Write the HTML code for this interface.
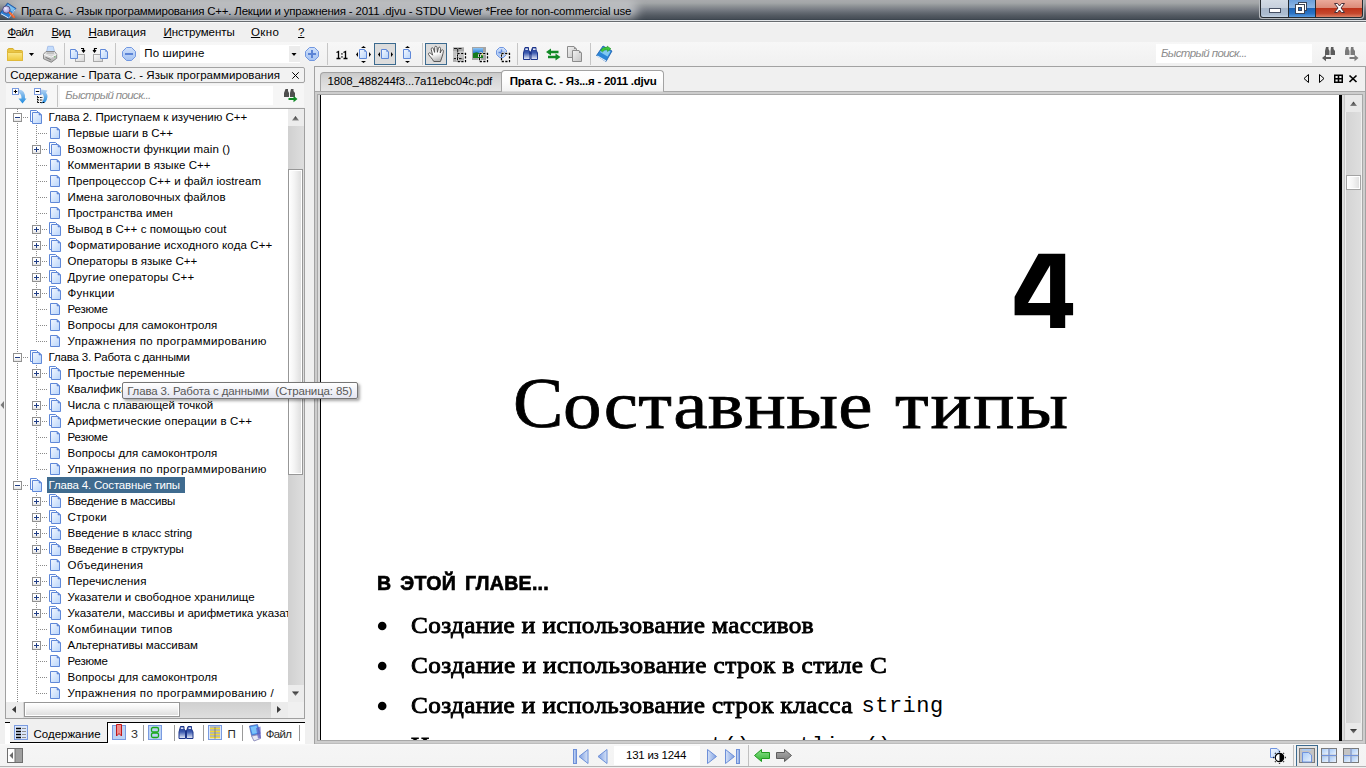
<!DOCTYPE html>
<html lang="ru">
<head>
<meta charset="utf-8">
<title>STDU Viewer</title>
<style>
*{box-sizing:border-box;margin:0;padding:0}
html,body{width:1366px;height:768px;overflow:hidden;background:#f0f0f0;font-family:"Liberation Sans",sans-serif;font-size:12px;color:#000}
div,span,svg{position:absolute}
svg{overflow:visible}
#titlebar{left:0;top:0;width:1366px;height:20px;background:linear-gradient(#a9aaad 0%,#a3a6a8 15%,#8c9094 32%,#797d85 47%,#646a72 63%,#525961 79%,#474e57 93%,#38414a 100%)}
#titleline1{left:0;top:20px;width:1366px;height:1px;background:#e0e3e6}
#titleline1b{left:0;top:21px;width:1366px;height:1px;background:#686c70}
#titleline2{left:0;top:22px;width:1366px;height:1px;background:#fafafa}
#titleglow{left:10px;top:0px;width:628px;height:19px;background:rgba(205,207,210,.75);filter:blur(5px);border-radius:9px}
#titletext{left:21px;top:4px;font-size:11.5px;line-height:14px;white-space:nowrap;color:#000}
#menubar{left:0;top:23px;width:1366px;height:19px;background:#f0f0f0}
.mi{top:2px;font-size:11.5px;line-height:14px;white-space:nowrap}
.mi u{text-decoration:underline;text-underline-offset:1px}
#toolbar{left:0;top:42px;width:1366px;height:24px;background:linear-gradient(#f7f7f7,#f0f0f0)}
.tsep{top:1px;width:1px;height:22px;background:#c6c6c6}
.tbtn{top:1px;width:22px;height:22px;border:1px solid #3b6a8f;background:#dcdcdc}
/* left panel */
#phead{left:5px;top:67px;width:300px;height:16px;border:1px solid #a3a3a3;border-radius:2px;background:#f2f2f2}
#phead span{left:4px;top:0;font-size:11.5px;line-height:14px;white-space:nowrap;width:276px;overflow:hidden}
#psearch{left:6px;top:84px;width:298px;height:23px;background:#f6f6f6}
#pinput{left:60px;top:86px;width:213px;height:19px;background:#fff}
.ph{font-style:italic;color:#8c8c8c;font-size:11.5px;line-height:14px;white-space:nowrap}
#tree{left:5px;top:108px;width:300px;height:611px;border:1px solid #a0a0a0;background:#fff;overflow:hidden}
#treein{left:-6px;top:-109px;width:294px;height:810px;overflow:hidden}
.t{height:16px;font-size:11.5px;line-height:16px;white-space:nowrap}
.vd{width:1px;background:repeating-linear-gradient(to bottom,#8a8a8a 0,#8a8a8a 1px,transparent 1px,transparent 2px)}
.hd{height:1px;background:repeating-linear-gradient(to right,#8a8a8a 0,#8a8a8a 1px,transparent 1px,transparent 2px)}
.ex{width:9px;height:9px;border:1px solid #919191;background:linear-gradient(#fff 0%,#fff 50%,#e2e2e2 100%)}
.ex i{position:absolute;left:1px;top:3px;width:5px;height:1px;background:#1f3d85}
.ex b{position:absolute;left:3px;top:1px;width:1px;height:5px;background:#1f3d85}
#ptabs{left:5px;top:722px;width:300px;height:22px;background:#fff}
/* doc area */
#dframe{left:314px;top:66px;width:1052px;height:678px;border:1px solid #a2a2a2;background:#f0f0f0}
#dview{left:315px;top:91px;width:1050px;height:653px;background:#bdbdbd}
#page{left:321px;top:95px;width:1018px;height:645px;background:#fff;overflow:hidden}
#status{left:0;top:744px;width:1366px;height:24px;background:linear-gradient(#fafafa 0,#f5f5f5 2px,#f3f3f3 100%)}
.bl{font-family:"Liberation Serif",serif;font-size:24px;line-height:28px;white-space:nowrap;transform:scaleX(1.05);transform-origin:0 0;-webkit-text-stroke:.9px #000}
</style>
</head>
<body>
<svg width="0" height="0" style="left:-10px;top:-10px">
<defs>
<linearGradient id="gpg" x1="0" y1="0" x2="1" y2="1"><stop offset="0" stop-color="#f4f8fe"/><stop offset="1" stop-color="#b7d4fb"/></linearGradient>
<linearGradient id="gpgG" x1="0" y1="0" x2="1" y2="1"><stop offset="0" stop-color="#f2f2f2"/><stop offset="1" stop-color="#c4c4c4"/></linearGradient>
<linearGradient id="gpgL" x1="0" y1="0" x2="1" y2="1"><stop offset="0" stop-color="#fbfbfb"/><stop offset="1" stop-color="#d4d4d4"/></linearGradient>
<linearGradient id="gnav" x1="0" y1="0" x2="1" y2="0"><stop offset="0" stop-color="#d5e2f8"/><stop offset="1" stop-color="#7f9fe0"/></linearGradient>
<linearGradient id="gnavr" x1="1" y1="0" x2="0" y2="0"><stop offset="0" stop-color="#d5e2f8"/><stop offset="1" stop-color="#7f9fe0"/></linearGradient>
<linearGradient id="gsb" x1="0" y1="0" x2="1" y2="0"><stop offset="0" stop-color="#f3f3f3"/><stop offset="0.5" stop-color="#e6e6e6"/><stop offset="1" stop-color="#d4d4d4"/></linearGradient>
<!-- single page 10x12 -->
<symbol id="isgl" viewBox="0 0 10 12">
<path d="M0.5 0.5H7L9.5 3V11.5H0.5Z" fill="url(#gpg)" stroke="#5f88d8" stroke-width="1"/>
<path d="M7 0.5V3H9.5Z" fill="#5f88d8" stroke="#5f88d8" stroke-width="0.6"/>
</symbol>
<!-- double page 12x14 -->
<symbol id="idbl" viewBox="0 0 12 14">
<path d="M0.5 0.5H6.5L8.5 2.5V11.5H0.5Z" fill="#fbfdff" stroke="#5f88d8" stroke-width="1"/>
<path d="M2.5 2.5H9L11.5 5V13.5H2.5Z" fill="url(#gpg)" stroke="#5f88d8" stroke-width="1"/>
<path d="M9 2.5V5H11.5Z" fill="#5f88d8" stroke="#5f88d8" stroke-width="0.6"/>
</symbol>
<!-- toolbar page 8x10 -->
<symbol id="ipg8" viewBox="0 0 8 10">
<path d="M0.5 0.5H5.3L7.5 2.7V9.5H0.5Z" fill="url(#gpg)" stroke="#5f88d8" stroke-width="1"/>
<path d="M5.3 0.500V2.700H7.500Z" fill="#5f88d8"/>
</symbol>
</defs>
</svg>
<!-- TITLE BAR -->
<div id="titlebar"></div>
<div id="titleglow"></div>
<div id="titleline1"></div><div id="titleline1b"></div><div id="titleline2"></div>
<svg id="appicon" style="left:0;top:2px" width="17" height="18" viewBox="0 0 17 18">
<defs><radialGradient id="glens" cx="0.4" cy="0.35" r="0.7"><stop offset="0" stop-color="#f4f0ff"/><stop offset="0.6" stop-color="#b9b0e6"/><stop offset="1" stop-color="#8f86c8"/></radialGradient></defs>
<path d="M7.5 1L16 6.5L8.5 16.5L0 11.5Z" fill="#2a7fd6" stroke="#1b4f9c" stroke-width="0.8"/>
<path d="M8 2.2L15 6.8L12.5 10L6 5Z" fill="#7cc0f0"/>
<path d="M1 11.8L8.3 15.8" stroke="#e8f2ff" stroke-width="1"/>
<path d="M15.3 7.5L9 15.8" stroke="#cfe4fb" stroke-width="0.9"/>
<circle cx="6.4" cy="7.6" r="3.7" fill="url(#glens)" stroke="#4a4a78" stroke-width="0.9"/>
<path d="M9.8 10.8L14 15" stroke="#f0642c" stroke-width="2.2" stroke-linecap="round"/>
<path d="M10.2 10.6L14.2 14.6" stroke="#ffc8a8" stroke-width="0.6" stroke-dasharray="1 1"/>
</svg>
<div id="titletext" style="letter-spacing:-0.204px;left:21.0px;">Прата С. - Язык программирования C++. Лекции и упражнения - 2011 .djvu - STDU Viewer *Free for non-commercial use</div>
<!-- window buttons -->
<div style="left:1259px;top:0;width:105px;height:19px;background:#b4b8bc;border-radius:0 0 3px 3px"></div>
<div style="left:1260px;top:0;width:103px;height:18px;background:#262b31;border-radius:0 0 3px 3px"></div>
<div style="left:1261px;top:0;width:27px;height:17px;background:linear-gradient(#d3dbe5 0%,#c6d0dd 46%,#a8b7ca 47%,#adbdd0 85%,#c4d4e6 100%);border-radius:0 0 0 2px"></div>
<div style="left:1289px;top:0;width:26px;height:17px;background:linear-gradient(#6c9eda 0%,#8cb6e6 46%,#1b62b6 47%,#2b74c6 80%,#5b9ce0 100%)"></div>
<div style="left:1316px;top:0;width:46px;height:17px;background:linear-gradient(#eaaa9a 0%,#dc8b78 46%,#bd3118 47%,#c5482e 80%,#dc8268 100%);border-radius:0 0 2px 0"></div>
<svg style="left:1261px;top:0" width="102" height="17" viewBox="0 0 102 17">
<rect x="8.5" y="8.5" width="11" height="4" fill="#fff" stroke="#454f63" stroke-width="1"/>
<rect x="37.500" y="2.500" width="8" height="8" fill="#fff" stroke="#3a4458" stroke-width="1"/>
<rect x="34.500" y="4.500" width="9" height="9" fill="#fff" stroke="#3a4458" stroke-width="1"/>
<rect x="37.500" y="7.500" width="3" height="3" fill="#2a70c8" stroke="#3a4458" stroke-width="1"/>
<path d="M73.5 3.5H76.5L78.5 6L80.5 3.5H83.5L80 8L83.5 12.5H80.5L78.5 10L76.5 12.5H73.5L77 8Z" fill="#fff" stroke="#4a3038" stroke-width="1" stroke-linejoin="round"/>
</svg>

<!-- MENU BAR -->
<div id="menubar">
<span class="mi" id="m0" style="letter-spacing:-0.7px;left:7.5px;"><u>Ф</u>айл</span>
<span class="mi" id="m1" style="letter-spacing:-0.8px;left:51.5px;"><u>В</u>ид</span>
<span class="mi" id="m2" style="letter-spacing:0.1px;left:88.4px;"><u>Н</u>авигация</span>
<span class="mi" id="m3" style="letter-spacing:-0.05px;left:163.5px;"><u>И</u>нструменты</span>
<span class="mi" id="m4" style="letter-spacing:0.433px;left:250.9px;"><u>О</u>кно</span>
<span class="mi" id="m5" style="left:298px"><u>?</u></span>
</div>

<!-- TOOLBAR -->
<div id="toolbar">
<div class="tsep" style="left:64px"></div><div class="tsep" style="left:115px"></div><div class="tsep" style="left:327px"></div>
<div class="tsep" style="left:422px"></div><div class="tsep" style="left:517px"></div><div class="tsep" style="left:590px"></div>
<div class="tbtn" style="left:374px"></div><div class="tbtn" style="left:425px"></div>
<!-- combo -->
<div style="left:140px;top:3px;width:160px;height:18px;background:#fff"></div>
<div style="left:289px;top:4px;width:11px;height:16px;background:#ececec"></div>
<span id="combotxt" style="top:4px;font-size:11.5px;line-height:14px;white-space:nowrap;letter-spacing:0.137px;left:144.3px;">По ширине</span>
<!-- quick search -->
<div id="qinput" style="left:1156px;top:2px;width:156px;height:19px;background:#fff"></div>
<span class="ph" id="qph" style="top:4px;letter-spacing:-0.613px;left:1161.0px;">Быстрый поиск...</span>
<svg style="left:0;top:0" width="1366" height="24" viewBox="0 0 1366 24">
<defs>
<linearGradient id="gfold" x1="0" y1="0" x2="0" y2="1"><stop offset="0" stop-color="#fbe88a"/><stop offset="1" stop-color="#eec83c"/></linearGradient>
<linearGradient id="gcirc" x1="0" y1="0" x2="0" y2="1"><stop offset="0" stop-color="#cfe0fa"/><stop offset="1" stop-color="#a4c2f2"/></linearGradient>
<linearGradient id="gbino" x1="0" y1="0" x2="0" y2="1"><stop offset="0" stop-color="#20388c"/><stop offset="0.45" stop-color="#3d5bb0"/><stop offset="1" stop-color="#eef2fb"/></linearGradient>
<linearGradient id="ghand" x1="0" y1="0" x2="0.3" y2="1"><stop offset="0" stop-color="#fff"/><stop offset="0.6" stop-color="#fafafa"/><stop offset="1" stop-color="#bdbdbd"/></linearGradient>
<linearGradient id="gprn" x1="0" y1="0" x2="0" y2="1"><stop offset="0" stop-color="#f0f0f0"/><stop offset="1" stop-color="#a9a9a9"/></linearGradient>
<linearGradient id="gimg" x1="0" y1="0" x2="0" y2="1"><stop offset="0" stop-color="#8fc7f5"/><stop offset="0.45" stop-color="#2f7fd8"/><stop offset="0.55" stop-color="#2b8a2b"/><stop offset="1" stop-color="#0d5a14"/></linearGradient>
</defs>
<!-- folder -->
<path d="M7.5 8.5Q7.5 6.5 9 6.5H13L14.5 8.5H21.5Q22.5 8.5 22.5 9.5V18.5H7.5Z" fill="#e9c544" stroke="#d8b030" stroke-width="1"/>
<path d="M7.5 18.5V10.5H22.5V18.5Z" fill="url(#gfold)" stroke="#e0b93a" stroke-width="1"/>
<path d="M29 11H34L31.5 14Z" fill="#000"/>
<!-- printer -->
<path d="M47.8 4.300H53.200L54.600 10H46.600Z" fill="#c3dcfc" stroke="#9db8e4" stroke-width="0.8"/>
<path d="M43.500 12.200L46 9.500H54.600L56.700 12.200V16.300L51.300 20.300L43.500 16.800Z" fill="url(#gprn)" stroke="#808080" stroke-width="0.9" stroke-linejoin="round"/>
<path d="M43.800 12.300L51.200 15.200L56.500 12.300" fill="none" stroke="#fafafa" stroke-width="0.9"/>
<path d="M45.500 15.300L50.800 17.700" stroke="#6e6e6e" stroke-width="0.9"/>
<path d="M46.500 11H54" stroke="#8a8a8a" stroke-width="0.8"/>
<rect x="54.300" y="14.300" width="1.100" height="1.100" fill="#3aa63a"/>
<!-- rotate right -->
<rect x="75.5" y="12.5" width="9" height="7" fill="url(#gpgL)" stroke="#a8a8a8"/>
<use href="#ipg8" x="70" y="7" width="8" height="10"/>
<path d="M81 6.5H83.5V9.5M82 8.2L83.5 10L85 8.2" fill="none" stroke="#000" stroke-width="1.2"/>
<!-- rotate left -->
<rect x="93.5" y="12.5" width="9" height="7" fill="url(#gpgL)" stroke="#a8a8a8"/>
<use href="#ipg8" x="100" y="7" width="8" height="10"/>
<path d="M97 6.5H94.5V9.5M93 8.2L94.5 10L96 8.2" fill="none" stroke="#000" stroke-width="1.2"/>
<!-- minus / plus -->
<path d="M126.5 5.5H131.5L135.5 9.5V14.5L131.5 18.5H126.5L122.5 14.5V9.5Z" fill="url(#gcirc)" stroke="#7197e0" stroke-width="1"/>
<rect x="125" y="11" width="8" height="2" fill="#5b84d6"/>
<path d="M309.5 5.5H314.5L318.5 9.5V14.5L314.5 18.5H309.5L305.5 14.5V9.5Z" fill="url(#gcirc)" stroke="#7197e0" stroke-width="1"/>
<rect x="308" y="11" width="8" height="2" fill="#5b84d6"/><rect x="311" y="8" width="2" height="8" fill="#5b84d6"/>
<path d="M291.5 11H296.5L294 14Z" fill="#000"/>
<!-- 1:1 -->
<path d="M336.5 10.5L338.5 9.5V16M336.5 16.5H340.5M343.5 10.5L345.5 9.5V16M343.5 16.5H347.5" fill="none" stroke="#000" stroke-width="1.3"/>
<rect x="341.3" y="11.2" width="1.3" height="1.4" fill="#000"/><rect x="341.3" y="14.2" width="1.3" height="1.4" fill="#000"/>
<!-- fit page -->
<use href="#ipg8" x="359" y="7" width="8" height="10"/>
<path d="M358 10L356 12.5L358 15ZM369 10L371 12.5L369 15ZM361 6L363.5 4L366 6ZM361 19L363.5 21L366 19Z" fill="#000"/>
<!-- fit width (selected) -->
<use href="#ipg8" x="381" y="7" width="8" height="10"/>
<path d="M380 10L378 12.5L380 15ZM391 10L393 12.5L391 15Z" fill="#000"/>
<!-- fit height -->
<use href="#ipg8" x="403" y="7" width="8" height="10"/>
<path d="M405 6L407.5 4L410 6ZM405 19L407.5 21L410 19Z" fill="#000"/>
<!-- hand -->
<path d="M433.8 19.5C432 16.5 430.2 14.8 428.6 12.6C427.8 11.3 429.4 10.2 430.6 11.2L432.6 13.2L431.2 7.2C430.9 5.6 432.9 5.2 433.4 6.6L434.6 10.4L434.7 5.4C434.8 3.9 436.8 3.9 437 5.4L437.4 10.3L438.4 6C438.8 4.6 440.6 5 440.5 6.5L440.2 11L441.4 8.4C442 7.2 443.6 7.8 443.4 9.2C442.9 12.5 441.8 16 440.4 19.5Z" fill="url(#ghand)" stroke="#4a4a4a" stroke-width="0.9" stroke-linejoin="round"/>
<!-- text select -->
<rect x="453" y="5.3" width="11" height="14.6" fill="#a9a9a9"/>
<rect x="453" y="9" width="11" height="7" fill="#c2c2c2"/>
<path d="M454 6.500H457M458.500 6.500H461.500M457.700 6.500V16.500M454 16.500H461.500" stroke="#1a1a1a" stroke-width="1"/>
<rect x="457.5" y="11.5" width="8" height="8" fill="none" stroke="#fafafa" stroke-width="3" stroke-dasharray="2.6 1" stroke-dashoffset=".2"/>
<rect x="457.5" y="11.5" width="8" height="8" fill="none" stroke="#000" stroke-width="1.3" stroke-dasharray="2.2 1.4"/>
<!-- image select -->
<rect x="472" y="5" width="14" height="13" fill="#a5a5a5"/>
<rect x="473" y="6" width="10" height="10" fill="url(#gimg)"/>
<path d="M473 12Q476 9 479 11.5L483 13V16H473Z" fill="#157a1c"/>
<path d="M479 12.5L483 11V13.5Z" fill="#f0e070"/>
<rect x="479.5" y="11.5" width="8" height="8" fill="none" stroke="#fafafa" stroke-width="3" stroke-dasharray="2.6 1" stroke-dashoffset=".2"/>
<rect x="479.5" y="11.5" width="8" height="8" fill="none" stroke="#000" stroke-width="1.3" stroke-dasharray="2.2 1.4"/>
<!-- zoom select -->
<path d="M499.5 5.5H503.5L506.5 8.5V12.5L503.5 15.5H499.5L496.5 12.5V8.5Z" fill="url(#gcirc)" stroke="#7197e0" stroke-width="1"/>
<path d="M498.5 10.5H504.5M501.5 7.5V13.5" stroke="#5b84d6" stroke-width="1.4"/>
<rect x="501.5" y="11.5" width="8" height="8" fill="none" stroke="#fafafa" stroke-width="3" stroke-dasharray="2.6 1" stroke-dashoffset=".2"/>
<rect x="501.5" y="11.5" width="8" height="8" fill="none" stroke="#000" stroke-width="1.3" stroke-dasharray="2.2 1.4"/>
<!-- binoculars -->
<g id="bino">
<path d="M525 5.5H528.5V8L530 10V17.5H523.5V11Z" fill="url(#gbino)" stroke="#1c348a" stroke-width="1"/>
<path d="M532.5 5.5H536V8L537.5 11V17.5H531V10Z" fill="url(#gbino)" stroke="#1c348a" stroke-width="1"/>
<rect x="529.5" y="9.5" width="2" height="3" fill="#1c348a"/>
<rect x="525.3" y="6.4" width="2.6" height="1.6" fill="#dfe6f8"/><rect x="533" y="6.4" width="2.6" height="1.6" fill="#dfe6f8"/>
</g>
<!-- green arrows -->
<path d="M546 10L551 6.6V8.8H558.5V11.2H551V13.4Z" fill="#118a26"/>
<path d="M560.5 15L555.5 11.6V13.8H548V16.2H555.5V18.4Z" fill="#118a26"/>
<!-- copy (disabled) -->
<path d="M567.5 4.5H574L576.5 7V15.5H567.5Z" fill="url(#gpgG)" stroke="#8c8c8c"/>
<path d="M574 4.5V7H576.5Z" fill="#8c8c8c"/>
<path d="M572.5 8.5H579L581.5 11V19.5H572.5Z" fill="url(#gpgG)" stroke="#8c8c8c"/>
<path d="M579 8.5V11H581.5Z" fill="#8c8c8c"/>
<!-- book -->
<path d="M603 4L612 9L606 19.5L596.5 13.5Z" fill="#2b86d8" stroke="#1a5fae" stroke-width="0.8"/>
<path d="M603.2 5.5L610.5 9.5L607.5 14.5L600 10Z" fill="#7fc8f2"/>
<path d="M597.2 14L606 19" stroke="#dbeafa" stroke-width="1.4"/>
<path d="M600.5 8.5Q603 4.5 607.5 5.5L607 4L611 6.8L607.5 9.5L607.5 7.8Q604.5 7.2 602.5 9.8Z" fill="#3cc83c" stroke="#1c8a20" stroke-width="0.5"/>
<!-- right search icons -->
<g fill="#5c5c5c">
<path d="M1326 5H1328.5V7L1329.5 9V13H1325V9Z"/><path d="M1331 5H1333.5V7L1335 9V13H1330.5V9Z"/>
<path d="M1322 16L1326 12.8V15H1331V17H1326V19.2Z"/>
</g>
<g fill="#7a7a7a">
<path d="M1346 5H1348.5V7L1349.5 9V13H1345V9Z"/><path d="M1351 5H1353.5V7L1355 9V13H1350.5V9Z"/>
<path d="M1358.5 16L1354.5 12.8V15H1349.5V17H1354.5V19.2Z"/>
</g>
</svg>
</div>

<!-- LEFT PANEL -->
<div id="phead"><span id="pheadtxt" style="letter-spacing:0.06px;left:4.2px;">Содержание - Прата С. - Язык программирования</span>
<svg style="left:286px;top:4px" width="7" height="7" viewBox="0 0 7 7"><path d="M0.300 0.300L6.700 6.700M6.700 0.300L0.300 6.700" stroke="#000" stroke-width="1"/></svg>
</div>
<div id="psearch"></div>
<div style="left:57px;top:85px;width:1px;height:22px;background:#c4c4c4"></div>
<div id="pinput"><span class="ph" id="pph" style="top:2px;letter-spacing:-0.633px;left:5.3px;">Быстрый поиск...</span></div>
<svg style="left:0;top:84px" width="306" height="24" viewBox="0 0 306 24">
<defs><linearGradient id="gbl" x1="0" y1="0" x2="0" y2="1"><stop offset="0" stop-color="#b5d3f3"/><stop offset="1" stop-color="#1c8adf"/></linearGradient></defs>
<!-- expand all -->
<path d="M19 5.5Q25.5 6 25 14.5H26.5L22.5 19.5L18.5 14.5H21.5Q21.5 9 18 9Z" fill="url(#gbl)"/>
<rect x="12.5" y="4.5" width="6" height="6" fill="#fff" stroke="#7a9be0"/>
<path d="M13.8 7.5H17.2M15.5 5.8V9.2" stroke="#000" stroke-width="1"/>
<!-- collapse all -->
<path d="M41 5.5L47.5 6.5L46 8.5Q49.5 13 45 18.5L41 19.5Q46 14 42.5 10L41 11Z" fill="url(#gbl)"/>
<rect x="34.5" y="4.5" width="6" height="6" fill="#fff" stroke="#7a9be0"/>
<path d="M35.8 7.5H39.2" stroke="#000" stroke-width="1"/>
<path d="M37.5 12V18.5M37.5 13.5H43M37.5 16H43M37.5 18.5H45" fill="none" stroke="#000" stroke-width="1" stroke-dasharray="1.6 1"/>
<!-- find next -->
<g fill="#4e4e4e">
<path d="M285.5 5H288V7L289 9V13H284V9Z"/><path d="M291 5H293.5V7L295 9V13H290V9Z"/>
</g>
<path d="M297.5 15L293.5 11.8V14H288.5V16H293.5V18.2Z" fill="#118a26"/>
</svg>

<div id="tree"><div id="treein">
<div class="vd" style="left:17px;top:109px;height:593px"></div>
<div class="vd" style="left:36px;top:125px;height:217px"></div>
<div class="vd" style="left:36px;top:365px;height:105px"></div>
<div class="vd" style="left:36px;top:493px;height:201px"></div>
<div class="hd" style="left:23px;top:117px;width:6px"></div>
<div class="ex" style="left:13px;top:113px"><i></i></div>
<svg style="left:30px;top:110px" width="12" height="14"><use href="#idbl"/></svg>
<span class="t" id="r0" style="left:48.6px;top:109px;letter-spacing:-0.024px">Глава 2. Приступаем к изучению C++</span>
<div class="hd" style="left:36px;top:133px;width:12px"></div>
<svg style="left:50px;top:127px" width="10" height="12"><use href="#isgl"/></svg>
<span class="t" id="r1" style="left:67.6px;top:125px;letter-spacing:-0.013px">Первые шаги в C++</span>
<div class="hd" style="left:42px;top:149px;width:6px"></div>
<div class="ex" style="left:32px;top:145px"><i></i><b></b></div>
<svg style="left:49px;top:142px" width="12" height="14"><use href="#idbl"/></svg>
<span class="t" id="r2" style="left:67.6px;top:141px;letter-spacing:0.123px">Возможности функции main ()</span>
<div class="hd" style="left:36px;top:165px;width:12px"></div>
<svg style="left:50px;top:159px" width="10" height="12"><use href="#isgl"/></svg>
<span class="t" id="r3" style="left:67.6px;top:157px;letter-spacing:0.082px">Комментарии в языке C++</span>
<div class="hd" style="left:36px;top:181px;width:12px"></div>
<svg style="left:50px;top:175px" width="10" height="12"><use href="#isgl"/></svg>
<span class="t" id="r4" style="left:67.6px;top:173px;letter-spacing:0.064px">Препроцессор C++ и файл iostream</span>
<div class="hd" style="left:36px;top:197px;width:12px"></div>
<svg style="left:50px;top:191px" width="10" height="12"><use href="#isgl"/></svg>
<span class="t" id="r5" style="left:67.6px;top:189px;letter-spacing:0.051px">Имена заголовочных файлов</span>
<div class="hd" style="left:36px;top:213px;width:12px"></div>
<svg style="left:50px;top:207px" width="10" height="12"><use href="#isgl"/></svg>
<span class="t" id="r6" style="left:67.6px;top:205px;letter-spacing:0.024px">Пространства имен</span>
<div class="hd" style="left:42px;top:229px;width:6px"></div>
<div class="ex" style="left:32px;top:225px"><i></i><b></b></div>
<svg style="left:49px;top:222px" width="12" height="14"><use href="#idbl"/></svg>
<span class="t" id="r7" style="left:67.6px;top:221px;letter-spacing:0.072px">Вывод в C++ с помощью cout</span>
<div class="hd" style="left:42px;top:245px;width:6px"></div>
<div class="ex" style="left:32px;top:241px"><i></i><b></b></div>
<svg style="left:49px;top:238px" width="12" height="14"><use href="#idbl"/></svg>
<span class="t" id="r8" style="left:67.6px;top:237px;letter-spacing:0.111px">Форматирование исходного кода C++</span>
<div class="hd" style="left:42px;top:261px;width:6px"></div>
<div class="ex" style="left:32px;top:257px"><i></i><b></b></div>
<svg style="left:49px;top:254px" width="12" height="14"><use href="#idbl"/></svg>
<span class="t" id="r9" style="left:67.6px;top:253px;letter-spacing:0.03px">Операторы в языке C++</span>
<div class="hd" style="left:42px;top:277px;width:6px"></div>
<div class="ex" style="left:32px;top:273px"><i></i><b></b></div>
<svg style="left:49px;top:270px" width="12" height="14"><use href="#idbl"/></svg>
<span class="t" id="r10" style="left:67.6px;top:269px;letter-spacing:0.2px">Другие операторы C++</span>
<div class="hd" style="left:42px;top:293px;width:6px"></div>
<div class="ex" style="left:32px;top:289px"><i></i><b></b></div>
<svg style="left:49px;top:286px" width="12" height="14"><use href="#idbl"/></svg>
<span class="t" id="r11" style="left:67.6px;top:285px;letter-spacing:0.233px">Функции</span>
<div class="hd" style="left:36px;top:309px;width:12px"></div>
<svg style="left:50px;top:303px" width="10" height="12"><use href="#isgl"/></svg>
<span class="t" id="r12" style="left:67.6px;top:301px;letter-spacing:-0.24px">Резюме</span>
<div class="hd" style="left:36px;top:325px;width:12px"></div>
<svg style="left:50px;top:319px" width="10" height="12"><use href="#isgl"/></svg>
<span class="t" id="r13" style="left:67.6px;top:317px;letter-spacing:0.062px">Вопросы для самоконтроля</span>
<div class="hd" style="left:36px;top:341px;width:12px"></div>
<svg style="left:50px;top:335px" width="10" height="12"><use href="#isgl"/></svg>
<span class="t" id="r14" style="left:67.6px;top:333px;letter-spacing:0.331px">Упражнения по программированию</span>
<div class="hd" style="left:23px;top:357px;width:6px"></div>
<div class="ex" style="left:13px;top:353px"><i></i></div>
<svg style="left:30px;top:350px" width="12" height="14"><use href="#idbl"/></svg>
<span class="t" id="r15" style="left:48.6px;top:349px;letter-spacing:-0.176px">Глава 3. Работа с данными</span>
<div class="hd" style="left:42px;top:373px;width:6px"></div>
<div class="ex" style="left:32px;top:369px"><i></i><b></b></div>
<svg style="left:49px;top:366px" width="12" height="14"><use href="#idbl"/></svg>
<span class="t" id="r16" style="left:67.6px;top:365px;letter-spacing:0.022px">Простые переменные</span>
<div class="hd" style="left:36px;top:389px;width:12px"></div>
<svg style="left:50px;top:383px" width="10" height="12"><use href="#isgl"/></svg>
<span class="t" id="r17" style="left:67.6px;top:381px;letter-spacing:0.022px">Квалификатор const</span>
<div class="hd" style="left:42px;top:405px;width:6px"></div>
<div class="ex" style="left:32px;top:401px"><i></i><b></b></div>
<svg style="left:49px;top:398px" width="12" height="14"><use href="#idbl"/></svg>
<span class="t" id="r18" style="left:67.6px;top:397px;letter-spacing:-0.017px">Числа с плавающей точкой</span>
<div class="hd" style="left:42px;top:421px;width:6px"></div>
<div class="ex" style="left:32px;top:417px"><i></i><b></b></div>
<svg style="left:49px;top:414px" width="12" height="14"><use href="#idbl"/></svg>
<span class="t" id="r19" style="left:67.6px;top:413px;letter-spacing:0.151px">Арифметические операции в C++</span>
<div class="hd" style="left:36px;top:437px;width:12px"></div>
<svg style="left:50px;top:431px" width="10" height="12"><use href="#isgl"/></svg>
<span class="t" id="r20" style="left:67.6px;top:429px;letter-spacing:-0.24px">Резюме</span>
<div class="hd" style="left:36px;top:453px;width:12px"></div>
<svg style="left:50px;top:447px" width="10" height="12"><use href="#isgl"/></svg>
<span class="t" id="r21" style="left:67.6px;top:445px;letter-spacing:0.062px">Вопросы для самоконтроля</span>
<div class="hd" style="left:36px;top:469px;width:12px"></div>
<svg style="left:50px;top:463px" width="10" height="12"><use href="#isgl"/></svg>
<span class="t" id="r22" style="left:67.6px;top:461px;letter-spacing:0.331px">Упражнения по программированию</span>
<div class="hd" style="left:23px;top:485px;width:6px"></div>
<div class="ex" style="left:13px;top:481px"><i></i></div>
<svg style="left:30px;top:478px" width="12" height="14"><use href="#idbl"/></svg>
<div style="left:47px;top:477px;width:138px;height:16px;background:#3f6b8f"></div>
<span class="t" id="r23" style="left:48.6px;top:477px;letter-spacing:-0.182px;color:#fff">Глава 4. Составные типы</span>
<div class="hd" style="left:42px;top:501px;width:6px"></div>
<div class="ex" style="left:32px;top:497px"><i></i><b></b></div>
<svg style="left:49px;top:494px" width="12" height="14"><use href="#idbl"/></svg>
<span class="t" id="r24" style="left:67.6px;top:493px;letter-spacing:-0.199px">Введение в массивы</span>
<div class="hd" style="left:42px;top:517px;width:6px"></div>
<div class="ex" style="left:32px;top:513px"><i></i><b></b></div>
<svg style="left:49px;top:510px" width="12" height="14"><use href="#idbl"/></svg>
<span class="t" id="r25" style="left:67.6px;top:509px;letter-spacing:0.24px">Строки</span>
<div class="hd" style="left:42px;top:533px;width:6px"></div>
<div class="ex" style="left:32px;top:529px"><i></i><b></b></div>
<svg style="left:49px;top:526px" width="12" height="14"><use href="#idbl"/></svg>
<span class="t" id="r26" style="left:67.6px;top:525px;letter-spacing:-0.045px">Введение в класс string</span>
<div class="hd" style="left:42px;top:549px;width:6px"></div>
<div class="ex" style="left:32px;top:545px"><i></i><b></b></div>
<svg style="left:49px;top:542px" width="12" height="14"><use href="#idbl"/></svg>
<span class="t" id="r27" style="left:67.6px;top:541px;letter-spacing:-0.116px">Введение в структуры</span>
<div class="hd" style="left:36px;top:565px;width:12px"></div>
<svg style="left:50px;top:559px" width="10" height="12"><use href="#isgl"/></svg>
<span class="t" id="r28" style="left:67.6px;top:557px;letter-spacing:0.2px">Объединения</span>
<div class="hd" style="left:42px;top:581px;width:6px"></div>
<div class="ex" style="left:32px;top:577px"><i></i><b></b></div>
<svg style="left:49px;top:574px" width="12" height="14"><use href="#idbl"/></svg>
<span class="t" id="r29" style="left:67.6px;top:573px;letter-spacing:0.129px">Перечисления</span>
<div class="hd" style="left:42px;top:597px;width:6px"></div>
<div class="ex" style="left:32px;top:593px"><i></i><b></b></div>
<svg style="left:49px;top:590px" width="12" height="14"><use href="#idbl"/></svg>
<span class="t" id="r30" style="left:67.6px;top:589px;letter-spacing:-0.0px">Указатели и свободное хранилище</span>
<div class="hd" style="left:42px;top:613px;width:6px"></div>
<div class="ex" style="left:32px;top:609px"><i></i><b></b></div>
<svg style="left:49px;top:606px" width="12" height="14"><use href="#idbl"/></svg>
<span class="t" id="r31" style="left:67.6px;top:605px;letter-spacing:-0.0px">Указатели, массивы и арифметика указателей</span>
<div class="hd" style="left:36px;top:629px;width:12px"></div>
<svg style="left:50px;top:623px" width="10" height="12"><use href="#isgl"/></svg>
<span class="t" id="r32" style="left:67.6px;top:621px;letter-spacing:0.347px">Комбинации типов</span>
<div class="hd" style="left:42px;top:645px;width:6px"></div>
<div class="ex" style="left:32px;top:641px"><i></i><b></b></div>
<svg style="left:49px;top:638px" width="12" height="14"><use href="#idbl"/></svg>
<span class="t" id="r33" style="left:67.6px;top:637px;letter-spacing:-0.07px">Альтернативы массивам</span>
<div class="hd" style="left:36px;top:661px;width:12px"></div>
<svg style="left:50px;top:655px" width="10" height="12"><use href="#isgl"/></svg>
<span class="t" id="r34" style="left:67.6px;top:653px;letter-spacing:-0.24px">Резюме</span>
<div class="hd" style="left:36px;top:677px;width:12px"></div>
<svg style="left:50px;top:671px" width="10" height="12"><use href="#isgl"/></svg>
<span class="t" id="r35" style="left:67.6px;top:669px;letter-spacing:0.062px">Вопросы для самоконтроля</span>
<div class="hd" style="left:36px;top:693px;width:12px"></div>
<svg style="left:50px;top:687px" width="10" height="12"><use href="#isgl"/></svg>
<span class="t" id="r36" style="left:67.6px;top:685px;letter-spacing:0.343px">Упражнения по программированию /</span>
</div><!-- tree scrollbars: coords relative to (6,109) -->
<div style="left:282px;top:0;width:16px;height:593px;background:linear-gradient(to right,#d0d0d0,#dedede)"></div>
<div style="left:282px;top:0;width:16px;height:17px;background:#ececec"></div>
<div style="left:282px;top:576px;width:16px;height:17px;background:#ececec"></div>
<div style="left:282px;top:60px;width:15px;height:306px;border:1px solid #979797;background:linear-gradient(to right,#fff 0%,#f4f4f4 40%,#dcdcdc 100%);box-shadow:inset 0 0 0 1px #fff"></div>
<div style="left:0;top:593px;width:282px;height:16px;background:linear-gradient(#d0d0d0,#dedede)"></div>
<div style="left:0;top:593px;width:17px;height:16px;background:#ececec"></div>
<div style="left:265px;top:593px;width:17px;height:16px;background:#ececec"></div>
<div style="left:282px;top:593px;width:16px;height:16px;background:#f0f0f0"></div>
<div style="left:18px;top:593px;width:156px;height:15px;border:1px solid #979797;background:linear-gradient(#fff 0%,#f4f4f4 40%,#dcdcdc 100%);box-shadow:inset 0 0 0 1px #fff"></div>
<svg style="left:0;top:0" width="298" height="609" viewBox="0 0 298 609">
<defs><linearGradient id="garr" x1="0" y1="0" x2="0" y2="1"><stop offset="0" stop-color="#303030"/><stop offset="1" stop-color="#8a8a8a"/></linearGradient></defs>
<path d="M286 11.5L289.5 7L293 11.5Z" fill="url(#garr)"/>
<path d="M286 582.5L289.5 587L293 582.5Z" fill="url(#garr)"/>
<path d="M10 597L6 600.5L10 604Z" fill="#3a3a3a"/>
<path d="M271 597L275 600.5L271 604Z" fill="#3a3a3a"/>
</svg>
</div>
<!-- bottom tabs of the left panel -->
<div id="ptabs">
<div style="left:0;top:0;width:300px;height:1px;background:#000"></div>
<div style="left:5px;top:0;width:98px;height:21px;background:#f0f0f0;border-right:1px solid #000;border-bottom:1px solid #000"></div>
<span id="tabsod" style="top:5px;font-size:11.5px;line-height:14px;white-space:nowrap;letter-spacing:-0.011px;left:28.5px;">Содержание</span>
<span style="left:126px;top:5px;font-size:11.5px;line-height:14px;color:#2c2c2c">З</span>
<span style="left:222.500px;top:5px;font-size:11.5px;line-height:14px;color:#2c2c2c">П</span>
<span id="tabfile" style="top:5px;font-size:11.5px;line-height:14px;color:#2c2c2c;letter-spacing:-0.633px;left:260.7px;">Файл</span>
<div style="left:138px;top:3px;width:1px;height:16px;background:#9a9a9a"></div>
<div style="left:169px;top:3px;width:1px;height:16px;background:#9a9a9a"></div>
<div style="left:198px;top:3px;width:1px;height:16px;background:#9a9a9a"></div>
<div style="left:237px;top:3px;width:1px;height:16px;background:#9a9a9a"></div>
<div style="left:294px;top:3px;width:1px;height:16px;background:#9a9a9a"></div>
<svg style="left:0;top:0" width="300" height="22" viewBox="0 0 300 22">
<!-- contents icon -->
<rect x="9.5" y="3.5" width="13" height="14" fill="#dbe7fb" stroke="#7a9be0"/>
<path d="M11 6.5H16M11 9.5H16M11 12.5H16M11 15.5H16" stroke="#000" stroke-width="1.3"/>
<path d="M17 6.5H21M17 9.5H21M17 12.5H21M17 15.5H21" stroke="#8f8f8f" stroke-width="1"/>
<!-- bookmark icon -->
<rect x="107.5" y="3.5" width="13" height="14" fill="#bcd3f5" stroke="#7a9be0"/>
<path d="M111.5 2.5H116.5V14L114 11.5L111.5 14Z" fill="#f08a8a" stroke="#c01818" stroke-width="1"/>
<!-- thumbnails icon -->
<rect x="143.5" y="3.5" width="13" height="14" fill="#bcd3f5" stroke="#7a9be0"/>
<rect x="146.5" y="5.5" width="7" height="4.5" rx="1.5" fill="none" stroke="#18a818" stroke-width="1.3"/>
<rect x="146.5" y="11" width="7" height="4.5" rx="1.5" fill="none" stroke="#18a818" stroke-width="1.3"/>
<!-- binoculars -->
<g transform="translate(-349.5,-1)"><use href="#bino"/></g>
<!-- table icon -->
<rect x="203.5" y="3.5" width="13" height="14" fill="#dbe7fb" stroke="#7a9be0"/>
<path d="M205 6.5H215M205 9.5H215M205 12.5H215M205 15.5H215" stroke="#f2d830" stroke-width="1.6"/>
<path d="M205 5H215M205 8H215M205 11H215M205 14H215M210 5V17" stroke="#5a5a5a" stroke-width="0.6"/>
<!-- file icon -->
<path d="M244.5 4L252.5 2.5L255 11.5L246.5 13.5Z" fill="#3f8ff0" stroke="#5a6ab0" stroke-width="0.8"/>
<path d="M245.5 5L251.5 3.8L253.5 10.5L247.5 12Z" fill="#7cc4fa"/>
<path d="M246.5 14L254.5 12.5L255.5 16.5L249 19Z" fill="#e8e8f4" stroke="#7a7ab0" stroke-width="0.8"/>
<path d="M251 6L255.5 4.5L256 16L253 16.5Z" fill="#5a5ac0" opacity="0.7"/>
</svg>
</div>
<!-- DOC AREA -->
<div id="dframe"></div>
<!-- tabs -->
<div style="left:320px;top:72px;width:182px;height:20px;border:1px solid #a3a3a3;border-bottom:none;border-radius:4px 0 0 0;background:linear-gradient(#c9c9c9 0%,#d6d6d6 30%,#e6e6e6 100%)"></div>
<span id="tab1" style="top:74px;font-size:11.5px;line-height:14px;white-space:nowrap;letter-spacing:-0.2px;left:327.6px;">1808_488244f3...7a11ebc04c.pdf</span>
<div id="dview"></div>
<div style="left:501px;top:70px;width:163px;height:22px;border:1px solid #a3a3a3;border-bottom:none;border-radius:4px 4px 0 0;background:linear-gradient(#fff 0%,#fcfcfc 50%,#f1f1f1 100%)"></div>
<span id="tab2" style="top:74px;font-size:11.5px;line-height:14px;font-weight:bold;white-space:nowrap;letter-spacing:-0.25px;left:509.8px;">Прата С. - Яз...я - 2011 .djvu</span>
<svg style="left:1300px;top:72px" width="62" height="14" viewBox="0 0 62 14">
<path d="M8.5 2.5V10.5L4 6.5Z" fill="none" stroke="#000" stroke-width="1"/>
<path d="M19.5 2.5V10.5L24 6.5Z" fill="none" stroke="#000" stroke-width="1"/>
<rect x="34" y="2.5" width="9" height="8.5" fill="#000"/>
<rect x="35.5" y="4" width="2.2" height="2" fill="#f0f0f0"/><rect x="39.3" y="4" width="2.2" height="2" fill="#f0f0f0"/>
<rect x="35.5" y="7.5" width="2.2" height="2" fill="#f0f0f0"/><rect x="39.3" y="7.5" width="2.2" height="2" fill="#f0f0f0"/>
<path d="M49.5 3.5L56.5 10M56.5 3.5L49.5 10" stroke="#000" stroke-width="1.7"/>
</svg>
<!-- doc view frame -->
<div style="left:315px;top:91px;width:1050px;height:1px;background:#a8a8a8"></div>
<div style="left:502px;top:91px;width:161px;height:1px;background:#dadada"></div>
<div style="left:315px;top:92px;width:1050px;height:651px;background:#cdcdcd"></div>
<div style="left:317px;top:94px;width:1046px;height:647px;background:#a8a8a8"></div>
<div style="left:318px;top:95px;width:1044px;height:645px;background:#dcdcdc"></div>
<div style="left:320px;top:95px;width:1px;height:645px;background:#000"></div>
<div id="page">
<svg style="left:0;top:0" width="1018" height="645" viewBox="321 95 1018 645">
<path d="M1038.5 253.7H1065.2V303.1H1073.1V315.2H1065.2V327.9H1050.1V315.2H1014.6V296.7Z M1050.1 265.3V303.1H1028Z" fill="#000" fill-rule="evenodd"/>
<circle cx="382.2" cy="626" r="4.3" fill="#000"/><circle cx="382.2" cy="666" r="4.3" fill="#000"/><circle cx="382.2" cy="706" r="4.3" fill="#000"/>
</svg>
<span id="h1c" style="left:192px;top:268px;font-family:'Liberation Serif',serif;font-size:72px;line-height:80px;white-space:nowrap;transform:scaleX(1.05);transform-origin:0 0;-webkit-text-stroke:.75px #000">С</span>
<span id="h1a" style="left:242px;top:269.7px;font-family:'Liberation Serif',serif;font-size:67px;line-height:80px;white-space:nowrap;letter-spacing:.3px;transform:scaleX(1.15);transform-origin:0 0;-webkit-text-stroke:.75px #000">оставные</span>
<span id="h1b" style="left:574px;top:269.7px;font-family:'Liberation Serif',serif;font-size:67px;line-height:80px;white-space:nowrap;letter-spacing:1.5px;transform:scaleX(1.15);transform-origin:0 0;-webkit-text-stroke:.75px #000">типы</span>
<span id="h2" style="left:56.3px;top:476px;font-weight:bold;font-size:21px;line-height:24px;white-space:nowrap;transform:scaleX(.93);transform-origin:0 0;-webkit-text-stroke:.7px #000;word-spacing:3.5px;letter-spacing:.3px">В ЭТОЙ ГЛАВЕ...</span>
<span class="bl" id="b1" style="left:89.5px;top:516px;letter-spacing:.37px">Создание и использование массивов</span>
<span class="bl" id="b2" style="left:89.5px;top:556px;letter-spacing:.43px">Создание и использование строк в стиле C</span>
<span class="bl" id="b3" style="left:89.5px;top:596px;letter-spacing:.37px">Создание и использование строк класса</span>
<span id="b3m" style="left:540.5px;top:597.5px;font-family:'Liberation Mono',monospace;font-size:22px;line-height:28px;white-space:nowrap;letter-spacing:.5px">string</span>
<span class="bl" id="b4" style="left:89.5px;top:636px;letter-spacing:.37px">Использование методов</span>
<span id="b4m" style="left:363px;top:637.5px;font-family:'Liberation Mono',monospace;font-size:22px;line-height:28px;white-space:nowrap">get()</span>
<span class="bl" id="b4c" style="left:432px;top:636px">и</span>
<span id="b4n" style="left:451.5px;top:637.5px;font-family:'Liberation Mono',monospace;font-size:22px;line-height:28px;white-space:nowrap">getline()</span>
</div>
<div style="left:1339px;top:95px;width:3px;height:646px;background:#000"></div>
<!-- doc scrollbar -->
<div style="left:1344px;top:95px;width:1px;height:645px;background:#c8c8c8"></div>
<div style="left:1345px;top:95px;width:17px;height:645px;background:linear-gradient(to right,#f0f0f0 0,#f0f0f0 1px,#d4d4d4 1px,#dedede 16px,#f0f0f0 16px)"></div>
<div style="left:1345px;top:95px;width:17px;height:17px;background:#e9e9e9"></div>
<div style="left:1345px;top:723px;width:17px;height:17px;background:#e9e9e9"></div>
<div style="left:1346px;top:175px;width:15px;height:15px;border:1px solid #a3a3a3;background:linear-gradient(to right,#fff 0%,#f4f4f4 45%,#dedede 100%);box-shadow:inset 0 0 0 1px #fff"></div>
<svg style="left:1345px;top:95px" width="17" height="646" viewBox="0 0 17 646">
<path d="M5 11L8.5 6.5L12 11Z" fill="url(#garr)"/>
<path d="M5 634L8.500 638.500L12 634Z" fill="url(#garr)"/>
</svg>
<!-- STATUS -->
<div id="status">
<div style="left:0;top:22px;width:1366px;height:1px;background:#b4b4b4"></div>
<div style="left:0;top:23px;width:1366px;height:1px;background:#f0f0f0"></div>
<div style="left:614px;top:2px;width:86px;height:19px;background:#fff"></div>
<span id="pgno" style="top:4px;font-size:11.5px;line-height:14px;white-space:nowrap;letter-spacing:-0.25px;left:626.0px;">131 из 1244</span>
<div style="left:748px;top:1px;width:1px;height:21px;background:#c0c0c0"></div>
<div style="left:1293px;top:1px;width:1px;height:21px;background:#c0c0c0"></div>
<div style="left:1296px;top:1px;width:22px;height:21px;border:1px solid #3b6a8f;border-bottom:none;background:#e6e6e6"></div>
<svg style="left:0;top:0" width="1366" height="24" viewBox="0 0 1366 24">
<defs>
<linearGradient id="ggrn" x1="0" y1="0" x2="0" y2="1"><stop offset="0" stop-color="#8fe08f"/><stop offset="1" stop-color="#2fb52f"/></linearGradient>
<linearGradient id="ggry" x1="0" y1="0" x2="0" y2="1"><stop offset="0" stop-color="#b0b0b0"/><stop offset="1" stop-color="#787878"/></linearGradient>
<linearGradient id="gsq" x1="0" y1="0" x2="1" y2="1"><stop offset="0" stop-color="#a9cbf7"/><stop offset="1" stop-color="#e9f2fd"/></linearGradient>
</defs>
<!-- left toggle -->
<rect x="7.5" y="4.5" width="15" height="14" fill="#fff" stroke="#6e6e6e"/>
<rect x="15" y="5" width="7" height="13" fill="#a0a0a0"/>
<path d="M15 4.5V18.5" stroke="#6e6e6e" stroke-width="1"/>
<path d="M13 8L9.5 11.5L13 15Z" fill="#6a6a6a"/>
<!-- nav -->
<rect x="573.5" y="5.5" width="3" height="14" fill="url(#gnav)" stroke="#6d8fd8"/>
<path d="M588 5.5V19.5L579 12.5Z" fill="url(#gnavr)" stroke="#6d8fd8" stroke-width="1"/>
<path d="M607 5.5V19.5L598 12.5Z" fill="url(#gnavr)" stroke="#6d8fd8" stroke-width="1"/>
<path d="M707.5 5.5V19.5L716.5 12.5Z" fill="url(#gnav)" stroke="#6d8fd8" stroke-width="1"/>
<path d="M725.5 5.5V19.5L734.5 12.5Z" fill="url(#gnav)" stroke="#6d8fd8" stroke-width="1"/>
<rect x="736.5" y="5.5" width="3" height="14" fill="url(#gnav)" stroke="#6d8fd8"/>
<path d="M754.5 11.5L761.5 5.5V8.5H769.5V14.5H761.5V17.5Z" fill="url(#ggrn)" stroke="#1f9a1f" stroke-width="1"/>
<path d="M791.5 11.5L784.5 5.5V8.5H776.5V14.5H784.5V17.5Z" fill="url(#ggry)" stroke="#5e5e5e" stroke-width="1"/>
<!-- night mode icon -->
<path d="M1270.5 4.5H1277L1279.500 7V13.500H1270.500Z" fill="url(#gpg)" stroke="#6f93de"/>
<circle cx="1279.5" cy="13.5" r="4.2" fill="#fff" stroke="#000" stroke-width="1.2"/>
<path d="M1279.5 9.3A4.2 4.200 0 0 1 1279.500 17.700Z" fill="#000"/>
<path d="M1279.5 7.2V8M1279.5 19V19.800M1273.200 13.500H1274M1285 13.500H1285.800M1275 9L1275.600 9.600M1284 9L1283.400 9.600M1275 18L1275.600 17.400M1284 18L1283.400 17.400" stroke="#000" stroke-width="1.3"/>
<!-- layout icons -->
<rect x="1299.5" y="4.5" width="15" height="14" fill="#c4c4c4" stroke="#7a7a7a"/>
<rect x="1302" y="5" width="9" height="1.600" fill="#a9cbf7"/>
<path d="M1302.500 8.500H1308.500L1311.500 11V18H1302.500Z" fill="url(#gsq)" stroke="#6f93de"/>
<rect x="1321.500" y="4.500" width="15" height="14" fill="#c4c4c4" stroke="#7a7a7a"/>
<rect x="1322" y="5" width="6" height="5.500" fill="url(#gsq)"/><rect x="1330" y="5" width="6" height="5.500" fill="url(#gsq)"/>
<rect x="1322" y="12.500" width="6" height="5.500" fill="url(#gsq)"/><rect x="1330" y="12.500" width="6" height="5.500" fill="url(#gsq)"/>
<path d="M1321.500 11.500H1336.500M1329 4.500V18.500" stroke="#6f93de" stroke-width="1"/>
<rect x="1343.500" y="4.500" width="15" height="14" fill="#c4c4c4" stroke="#7a7a7a"/>
<rect x="1352" y="5" width="6" height="5.500" fill="url(#gsq)"/>
<rect x="1344" y="12.500" width="6" height="5.500" fill="url(#gsq)"/><rect x="1352" y="12.500" width="6" height="5.500" fill="url(#gsq)"/>
<path d="M1343.500 11.500H1358.500M1351 4.500V18.500" stroke="#6f93de" stroke-width="1"/>
</svg>
</div>
<!-- tooltip -->
<div style="left:122px;top:382px;width:236px;height:17px;border:1px solid #767676;background:linear-gradient(#fff,#e4e5f0);border-radius:2px;box-shadow:2px 2px 3px rgba(0,0,0,.35)"></div>
<span id="tip" style="top:384px;font-size:11.5px;line-height:14px;white-space:pre;color:#575757;letter-spacing:-0.145px;left:127.2px;">Глава 3. Работа с данными  (Страница: 85)</span>
<!-- splitter arrow -->
<svg style="left:0;top:400px" width="5" height="10" viewBox="0 0 5 10"><path d="M4 1L0.500 5L4 9Z" fill="#7a7a7a"/></svg>

</body>
</html>
